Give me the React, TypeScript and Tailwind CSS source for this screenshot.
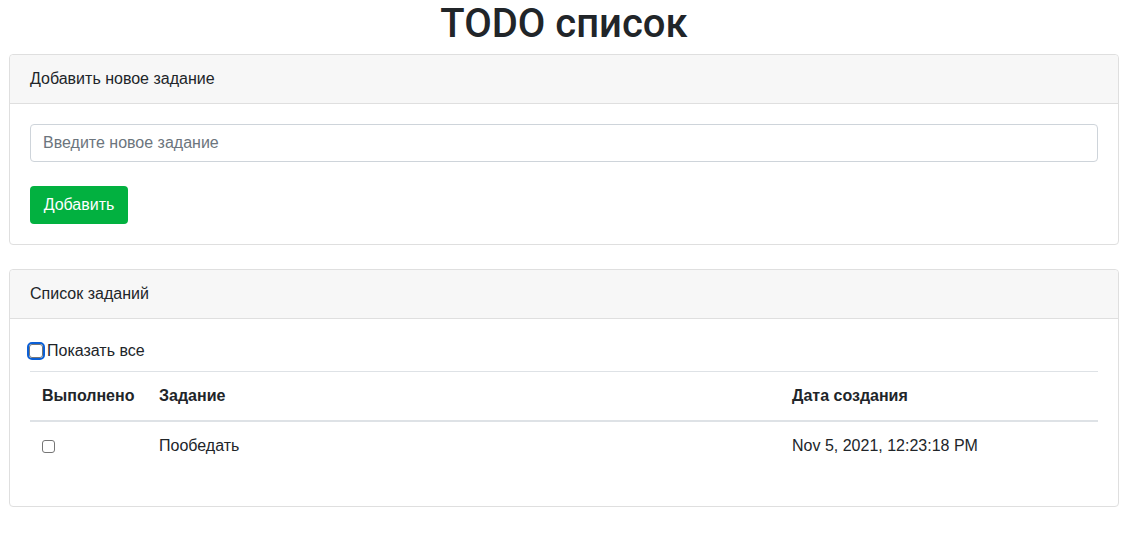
import { useState } from 'react'

type Task = {
    id: number
    done: boolean
    title: string
    created: string
}

const initialTasks: Task[] = [
    { id: 1, done: false, title: 'Пообедать', created: 'Nov 5, 2021, 12:23:18 PM' },
]

function Box({ checked, focused, onClick }: { checked: boolean; focused?: boolean; onClick: () => void }) {
    return (
        <span
            onClick={onClick}
            className={`block cursor-pointer rounded-[3px] border ${focused ? 'w-[14px] h-[14px] outline-2 outline-[#0b5fd6]' : 'w-[13px] h-[13px]'} ${
                checked ? 'bg-[#0b5fd6] border-[#0b5fd6]' : 'bg-white border-[#767676]'
            }`}
        />
    )
}

function CardHeader({ children }: { children: React.ReactNode }) {
    return (
        <div className="px-5 py-3 leading-6 bg-[#f7f7f7] border-b border-[#dfdfdf] rounded-t-[4px]">
            {children}
        </div>
    )
}

export default function App() {
    const [tasks, setTasks] = useState<Task[]>(initialTasks)
    const [input, setInput] = useState('')
    const [showAll, setShowAll] = useState(false)

    const addTask = () => {
        const trimmed = input.trim()
        if (!trimmed) return
        setTasks([
            ...tasks,
            { id: Date.now(), done: false, title: trimmed, created: new Date().toLocaleString('en-US', { dateStyle: 'medium', timeStyle: 'medium' }) },
        ])
        setInput('')
    }

    const toggle = (id: number) => {
        setTasks(tasks.map((t) => (t.id === id ? { ...t, done: !t.done } : t)))
    }

    const visible = showAll ? tasks : tasks.filter((t) => !t.done)

    return (
        <div className="min-h-screen bg-white text-[#212529] text-base font-['Liberation_Sans',Arial,sans-serif] pl-[9px] pr-[21px]">
            <h1 className="text-center text-[40px] font-medium leading-[48px] mb-[6px] font-['Roboto','Liberation_Sans',sans-serif]">
                TODO список
            </h1>

            <div className="border border-[#dfdfdf] rounded-[4px] mb-6">
                <CardHeader>Добавить новое задание</CardHeader>
                <div className="p-5">
                    <input
                        type="text"
                        value={input}
                        onChange={(e) => setInput(e.target.value)}
                        onKeyDown={(e) => e.key === 'Enter' && addTask()}
                        placeholder="Введите новое задание"
                        className="block w-full h-[38px] px-3 leading-6 border border-[#ced4da] rounded-[4px] placeholder:text-[#6c757d] focus:outline-none"
                    />
                    <button
                        type="button"
                        onClick={addTask}
                        className="mt-6 h-[38px] w-[98px] leading-6 rounded-[4px] bg-[#02b140] text-white"
                    >
                        Добавить
                    </button>
                </div>
            </div>

            <div className="border border-[#dfdfdf] rounded-[4px]">
                <CardHeader>Список заданий</CardHeader>
                <div className="p-5">
                    <label className="flex items-center h-6 mb-2 cursor-pointer -ml-[1px]">
                        <Box checked={showAll} focused onClick={() => setShowAll(!showAll)} />
                        <span className="ml-1">Показать все</span>
                    </label>
                    <table className="w-full mb-4 border-collapse">
                        <thead>
                            <tr className="border-t border-[#dee2e6] border-b-2">
                                <th className="w-[117px] px-3 py-3 text-left font-bold leading-6">Выполнено</th>
                                <th className="px-3 py-3 text-left font-bold leading-6">Задание</th>
                                <th className="w-[318px] px-3 py-3 text-left font-bold leading-6">Дата создания</th>
                            </tr>
                        </thead>
                        <tbody>
                            {visible.map((t) => (
                                <tr key={t.id}>
                                    <td className="px-3 py-3 leading-6 align-top">
                                        <span className="flex h-6 items-center">
                                            <Box checked={t.done} onClick={() => toggle(t.id)} />
                                        </span>
                                    </td>
                                    <td className="px-3 py-3 leading-6">{t.title}</td>
                                    <td className="px-3 py-3 leading-6">{t.created}</td>
                                </tr>
                            ))}
                        </tbody>
                    </table>
                </div>
            </div>
        </div>
    )
}
